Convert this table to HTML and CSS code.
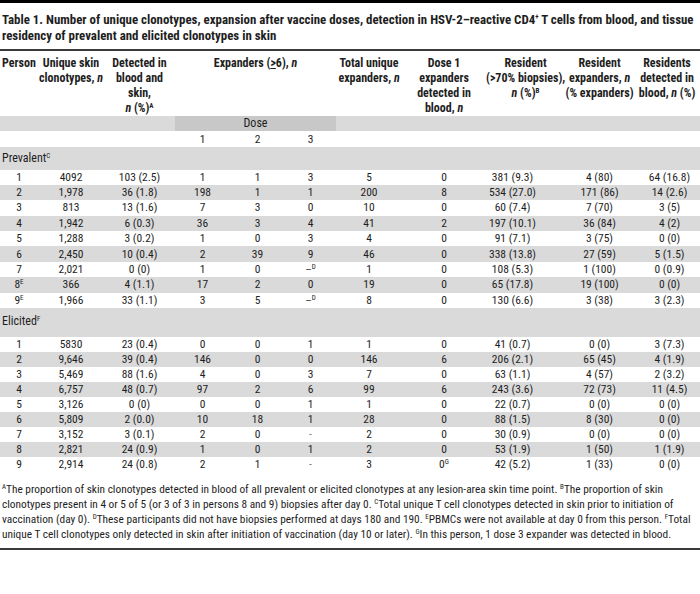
FILE: index.html
```html
<!DOCTYPE html>
<html>
<head>
<meta charset="utf-8">
<link rel="stylesheet" href="styles.css">
</head>
<body>
<div class="page">
  <div class="topbar"></div>
  <h1 class="title">Table 1. Number of unique clonotypes, expansion after vaccine doses, detection in HSV-2–reactive CD4<sup class="plus">+</sup> T cells from blood, and tissue<br>residency of prevalent and elicited clonotypes in skin</h1>
  <table class="tbl">
    <colgroup>
      <col class="c1"><col class="c2"><col class="c3"><col class="c4"><col class="c5"><col class="c6"><col class="c7"><col class="c8"><col class="c9"><col class="c10"><col class="c11">
    </colgroup>
    <thead>
      <tr class="head">
        <th>Person</th>
        <th>Unique skin<br>clonotypes, <i>n</i></th>
        <th>Detected in<br>blood and<br>skin,<br><i>n</i> (%)<sup class="fn">A</sup></th>
        <th colspan="3">Expanders (<u>&gt;</u>6), <i>n</i></th>
        <th>Total unique<br>expanders, <i>n</i></th>
        <th>Dose 1<br>expanders<br>detected in<br>blood, <i>n</i></th>
        <th>Resident<br>(&gt;70% biopsies),<br><i>n</i> (%)<sup class="fn">B</sup></th>
        <th>Resident<br>expanders, <i>n</i><br>(% expanders)</th>
        <th>Residents<br>detected in<br>blood, <i>n</i> (%)</th>
      </tr>
      <tr class="doserow">
        <td></td><td></td><td></td>
        <td colspan="3" class="dose">Dose</td>
        <td></td><td></td><td></td><td></td><td></td>
      </tr>
      <tr class="numrow">
        <td></td><td></td><td></td>
        <td>1</td><td>2</td><td>3</td>
        <td></td><td></td><td></td><td></td><td></td>
      </tr>
    </thead>
    <tbody class="prev">
      <tr class="group"><td colspan="11"><div class="glabel">Prevalent<sup class="fn">C</sup></div></td></tr>
      <tr><td>1</td><td>4092</td><td>103 (2.5)</td><td>1</td><td>1</td><td>3</td><td>5</td><td>0</td><td class="res">381 (9.3)</td><td>4 (80)</td><td class="rd">64 (16.8)</td></tr>
      <tr class="alt"><td>2</td><td>1,978</td><td>36 (1.8)</td><td>198</td><td>1</td><td>1</td><td>200</td><td>8</td><td class="res">534 (27.0)</td><td>171 (86)</td><td class="rd">14 (2.6)</td></tr>
      <tr><td>3</td><td>813</td><td>13 (1.6)</td><td>7</td><td>3</td><td>0</td><td>10</td><td>0</td><td class="res">60 (7.4)</td><td>7 (70)</td><td class="rd">3 (5)</td></tr>
      <tr class="alt"><td>4</td><td>1,942</td><td>6 (0.3)</td><td>36</td><td>3</td><td>4</td><td>41</td><td>2</td><td class="res">197 (10.1)</td><td>36 (84)</td><td class="rd">4 (2)</td></tr>
      <tr><td>5</td><td>1,288</td><td>3 (0.2)</td><td>1</td><td>0</td><td>3</td><td>4</td><td>0</td><td class="res">91 (7.1)</td><td>3 (75)</td><td class="rd">0 (0)</td></tr>
      <tr class="alt"><td>6</td><td>2,450</td><td>10 (0.4)</td><td>2</td><td>39</td><td>9</td><td>46</td><td>0</td><td class="res">338 (13.8)</td><td>27 (59)</td><td class="rd">5 (1.5)</td></tr>
      <tr><td>7</td><td>2,021</td><td>0 (0)</td><td>1</td><td>0</td><td><span class="dash">–</span><sup class="fn">D</sup></td><td>1</td><td>0</td><td class="res">108 (5.3)</td><td>1 (100)</td><td class="rd">0 (0.9)</td></tr>
      <tr class="alt"><td>8<sup class="fn">E</sup></td><td>366</td><td>4 (1.1)</td><td>17</td><td>2</td><td>0</td><td>19</td><td>0</td><td class="res">65 (17.8)</td><td>19 (100)</td><td class="rd">0 (0)</td></tr>
      <tr><td>9<sup class="fn">E</sup></td><td>1,966</td><td>33 (1.1)</td><td>3</td><td>5</td><td><span class="dash">–</span><sup class="fn">D</sup></td><td>8</td><td>0</td><td class="res">130 (6.6)</td><td>3 (38)</td><td class="rd">3 (2.3)</td></tr>
    </tbody>
    <tbody class="elic">
      <tr class="group"><td colspan="11"><div class="glabel">Elicited<sup class="fn">F</sup></div></td></tr>
      <tr><td>1</td><td>5830</td><td>23 (0.4)</td><td>0</td><td>0</td><td>1</td><td>1</td><td>0</td><td class="res">41 (0.7)</td><td>0 (0)</td><td class="rd">3 (7.3)</td></tr>
      <tr class="alt"><td>2</td><td>9,646</td><td>39 (0.4)</td><td>146</td><td>0</td><td>0</td><td>146</td><td>6</td><td class="res">206 (2.1)</td><td>65 (45)</td><td class="rd">4 (1.9)</td></tr>
      <tr><td>3</td><td>5,469</td><td>88 (1.6)</td><td>4</td><td>0</td><td>3</td><td>7</td><td>0</td><td class="res">63 (1.1)</td><td>4 (57)</td><td class="rd">2 (3.2)</td></tr>
      <tr class="alt"><td>4</td><td>6,757</td><td>48 (0.7)</td><td>97</td><td>2</td><td>6</td><td>99</td><td>6</td><td class="res">243 (3.6)</td><td>72 (73)</td><td class="rd">11 (4.5)</td></tr>
      <tr><td>5</td><td>3,126</td><td>0 (0)</td><td>0</td><td>0</td><td>1</td><td>1</td><td>0</td><td class="res">22 (0.7)</td><td>0 (0)</td><td class="rd">0 (0)</td></tr>
      <tr class="alt"><td>6</td><td>5,809</td><td>2 (0.0)</td><td>10</td><td>18</td><td>1</td><td>28</td><td>0</td><td class="res">88 (1.5)</td><td>8 (30)</td><td class="rd">0 (0)</td></tr>
      <tr><td>7</td><td>3,152</td><td>3 (0.1)</td><td>2</td><td>0</td><td class="hy">-</td><td>2</td><td>0</td><td class="res">30 (0.9)</td><td>0 (0)</td><td class="rd">0 (0)</td></tr>
      <tr class="alt"><td>8</td><td>2,821</td><td>24 (0.9)</td><td>1</td><td>0</td><td>1</td><td>2</td><td>0</td><td class="res">53 (1.9)</td><td>1 (50)</td><td class="rd">1 (1.9)</td></tr>
      <tr><td>9</td><td>2,914</td><td>24 (0.8)</td><td>2</td><td>1</td><td class="hy">-</td><td>3</td><td>0<sup class="fn">G</sup></td><td class="res">42 (5.2)</td><td>1 (33)</td><td class="rd">0 (0)</td></tr>
    </tbody>
  </table>
  <p class="notes"><sup class="fn">A</sup>The proportion of skin clonotypes detected in blood of all prevalent or elicited clonotypes at any lesion-area skin time point. <sup class="fn">B</sup>The proportion of skin<br>clonotypes present in 4 or 5 of 5 (or 3 of 3 in persons 8 and 9) biopsies after day 0. <sup class="fn">C</sup>Total unique T cell clonotypes detected in skin prior to initiation of<br>vaccination (day 0). <sup class="fn">D</sup>These participants did not have biopsies performed at days 180 and 190. <sup class="fn">E</sup>PBMCs were not available at day 0 from this person. <sup class="fn">F</sup>Total<br>unique T cell clonotypes only detected in skin after initiation of vaccination (day 10 or later). <sup class="fn">G</sup>In this person, 1 dose 3 expander was detected in blood.</p>
  <div class="bottomrule"></div>
</div>
</body>
</html>
```
FILE: styles.css
```css
html, body {
  margin: 0;
  padding: 0;
  background: #ffffff;
}
.page {
  width: 700px;
  color: #1e1e1e;
  font-family: "Roboto Condensed", "Roboto", "Liberation Sans", sans-serif;
  font-stretch: condensed;
}
.topbar {
  height: 3px;
  background: #000000;
}
.title {
  margin: 0;
  padding: 9px 2px 0 2px;
  font-size: 12.9px;
  line-height: 16px;
  font-weight: bold;
  height: 37px;
  white-space: nowrap;
}
.plus {
  font-size: 7px;
  vertical-align: 5px;
  line-height: 0;
}
.tbl {
  width: 700px;
  border-collapse: collapse;
  table-layout: fixed;
  border-top: 2px solid #3a3a3a;
}
.c1 { width: 38px; }
.c2 { width: 66px; }
.c3 { width: 71px; }
.c4 { width: 55px; }
.c5 { width: 55px; }
.c6 { width: 51px; }
.c7 { width: 66px; }
.c8 { width: 84px; }
.c9 { width: 79px; }
.c10 { width: 69px; }
.c11 { width: 66px; }
.tbl th, .tbl td {
  padding: 0;
  text-align: center;
  white-space: nowrap;
}
.head th {
  vertical-align: top;
  font-size: 12px;
  line-height: 15px;
  font-weight: bold;
  height: 59px;
  padding-top: 5px;
}
.doserow td {
  background: #dadada;
  height: 15px;
  font-size: 12px;
  line-height: 15px;
}
.doserow td.dose {
  background: #c8c8c8;
}
.numrow td {
  height: 16px;
  font-size: 11.5px;
  line-height: 16px;
}
tbody tr td {
  font-size: 11.5px;
  line-height: 15px;
}
.prev tr td {
  height: 15.4px;
}
.elic tr td {
  height: 15px;
}
tbody tr.alt td {
  background: #dadada;
}
tbody tr.group td {
  background: #dadada;
  text-align: left;
  height: auto;
}
.glabel {
  padding-left: 2px;
  font-size: 12px;
  height: 22.5px;
  line-height: 22px;
}
.elic .glabel {
  height: 29.4px;
  line-height: 27px;
}
td.res {
  padding-right: 26px;
}
td.rd {
  padding-left: 5px;
}
td.hy {
  color: #777777;
}
.dash {
  color: #444444;
}
.fn {
  font-size: 7px;
  vertical-align: 4px;
  line-height: 0;
  font-style: normal;
  font-weight: normal;
}
.head .fn {
  font-weight: bold;
}
.notes {
  margin: 0;
  padding: 9.5px 0 0 2px;
  font-size: 11.35px;
  line-height: 15px;
  white-space: nowrap;
}
.bottomrule {
  margin-top: 6px;
  height: 2px;
  background: #3a3a3a;
}
```
